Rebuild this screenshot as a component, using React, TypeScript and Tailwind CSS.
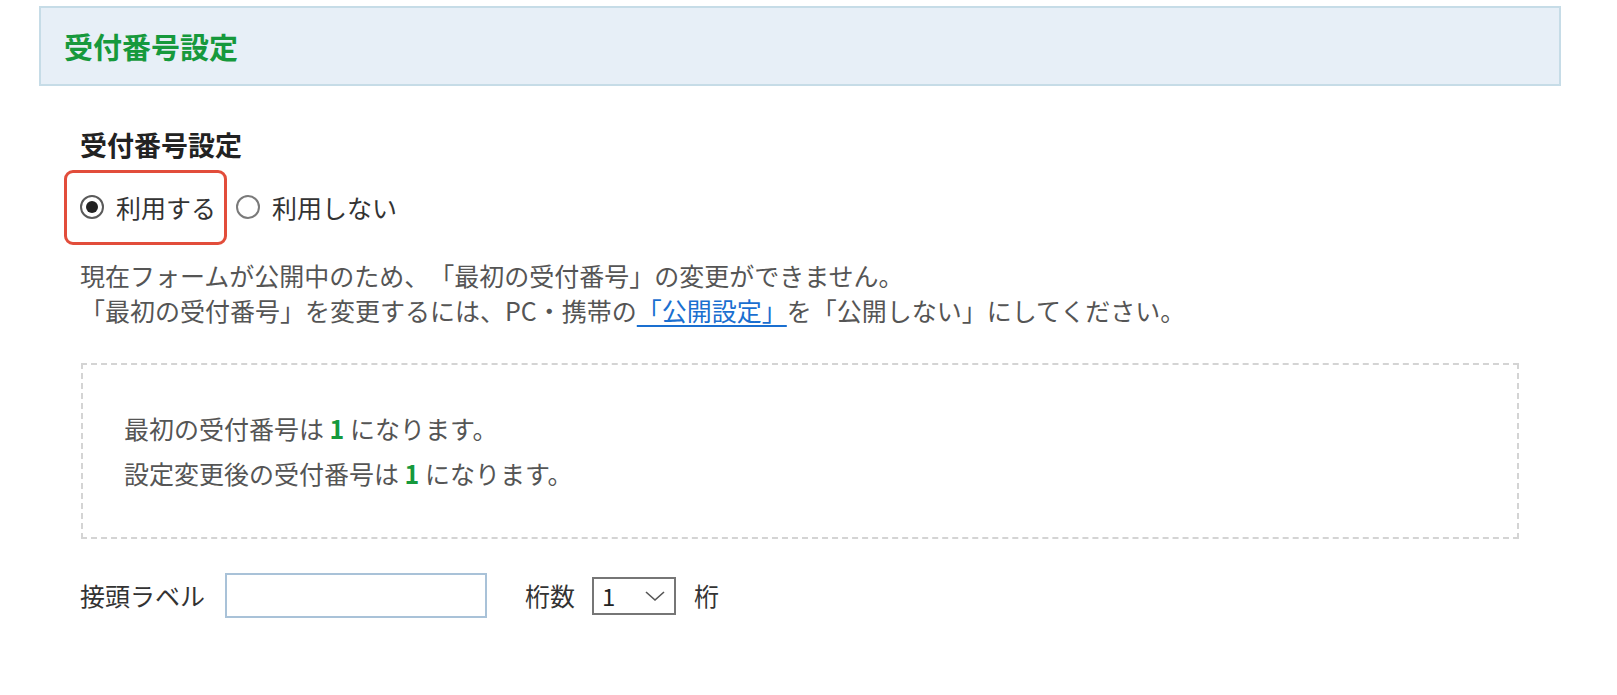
import React, { useState } from 'react';

const font = { fontFamily: '"Noto Sans CJK JP", "Noto Sans", sans-serif' };

const Radio: React.FC<{ checked: boolean; label: string; onClick: () => void }> = ({ checked, label, onClick }) => (
  <label className="flex items-center gap-[12px] cursor-pointer" onClick={onClick}>
    <span
      className={`flex items-center justify-center w-[24px] h-[24px] rounded-full border-2 bg-white ${
        checked ? 'border-[#5a5a5a]' : 'border-[#7a7a7a]'
      }`}
    >
      {checked && <span className="w-[12px] h-[12px] rounded-full bg-[#222]" />}
    </span>
    <span className="text-[#333]">{label}</span>
  </label>
);

const App: React.FC = () => {
  const [useNumber, setUseNumber] = useState(true);
  const [prefix, setPrefix] = useState('');
  const [digits, setDigits] = useState('1');

  return (
    <div className="min-h-screen bg-white pl-[39px] pr-[56px] pt-[6px] [text-spacing-trim:space-all]" style={font}>
      <div className="h-[80px] flex items-center pl-[23px] border-2 border-[#c6dce7] bg-[#e7eff7]">
        <h1 className="text-[29px] font-bold text-[#16993c] leading-none">受付番号設定</h1>
      </div>

      <div className="pl-[41px] pr-[42px]">
        <h2 className="mt-[41px] text-[27px] leading-[36px] font-bold text-[#222]">受付番号設定</h2>

        <div className="relative mt-[26px] h-[36px] flex items-center gap-[20px] text-[25px] leading-[36px]">
          <div className="absolute left-[-16px] top-[-19px] w-[163px] h-[75px] border-[3px] border-[#e24d3b] rounded-[9px] pointer-events-none" />
          <Radio checked={useNumber} label="利用する" onClick={() => setUseNumber(true)} />
          <Radio checked={!useNumber} label="利用しない" onClick={() => setUseNumber(false)} />
        </div>

        <div className="mt-[33px] text-[25px] leading-[35px] text-[#555]">
          <p>現在フォームが公開中のため、「最初の受付番号」の変更ができません。</p>
          <p>
            「最初の受付番号」を変更するには、PC・携帯の
            <a href="#" className="text-[#1a6fd0] underline underline-offset-[4px]">「公開設定」</a>
            を「公開しない」にしてください。
          </p>
        </div>

        <div className="mt-[35px] ml-[1px] border-2 border-dashed border-[#d4d4d4] py-[41px] pl-[41px] text-[25px] leading-[45px] text-[#555]">
          <p>
            最初の受付番号は <span className="font-bold text-[#16993c]">1</span> になります。
          </p>
          <p>
            設定変更後の受付番号は <span className="font-bold text-[#16993c]">1</span> になります。
          </p>
        </div>

        <div className="mt-[34px] flex items-center text-[25px] text-[#333]">
          <span>接頭ラベル</span>
          <input
            value={prefix}
            onChange={(e) => setPrefix(e.target.value)}
            className="ml-[20px] w-[262px] h-[45px] border-2 border-[#a9c2d8] px-2 outline-none text-[22px]"
          />
          <span className="ml-[38px]">桁数</span>
          <div className="relative ml-[17px] w-[84px] h-[38px]">
            <select
              value={digits}
              onChange={(e) => setDigits(e.target.value)}
              className="appearance-none w-full h-full border-2 border-[#767676] bg-white pl-[8px] text-[24px] leading-none text-[#222] outline-none"
            >
              {['1', '2', '3', '4', '5', '6', '7', '8', '9', '10'].map((d) => (
                <option key={d} value={d}>{d}</option>
              ))}
            </select>
            <svg
              className="absolute right-[10px] top-1/2 -translate-y-1/2 pointer-events-none"
              width="22"
              height="14"
              viewBox="0 0 22 14"
              fill="none"
            >
              <polyline points="2,3 11,11 20,3" stroke="#555" strokeWidth="1.6" />
            </svg>
          </div>
          <span className="ml-[18px]">桁</span>
        </div>
      </div>
    </div>
  );
};

export default App;
